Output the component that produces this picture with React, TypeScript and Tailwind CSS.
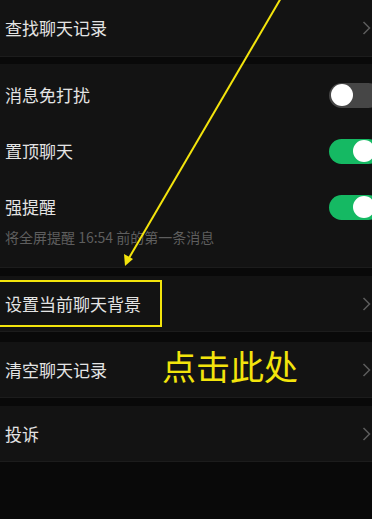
import React from "react";

const font = { fontFamily: '"Noto Sans CJK SC", "Noto Sans", sans-serif' };

function Chevron() {
  return (
    <svg width="9" height="14" viewBox="0 0 9 14" className="shrink-0">
      <path d="M1.5 1 L7.5 7 L1.5 13" fill="none" stroke="#5c5c5c" strokeWidth="1.5" />
    </svg>
  );
}

function Toggle({ on }: { on: boolean }) {
  return (
    <div
      className={`relative h-[25px] w-[52px] shrink-0 -mr-[9px] rounded-full ${
        on ? "bg-[#15b963]" : "bg-[#464646]"
      }`}
    >
      <div
        className={`absolute top-[1.5px] h-[22px] w-[22px] rounded-full bg-white ${
          on ? "right-[6px]" : "left-[1.5px]"
        }`}
      />
    </div>
  );
}

function LinkRow({ label, h = "h-[56px]" }: { label: string; h?: string }) {
  return (
    <div className={`flex ${h} items-center justify-between bg-[#131313] pl-[5px] pr-[1px] border-b border-[#1c1c1c]`}>
      <span className="text-[17px] text-[#e4e4e4]">{label}</span>
      <Chevron />
    </div>
  );
}

export default function App() {
  return (
    <div style={font} className="relative h-[519px] w-[372px] overflow-hidden bg-[#090909]">
      {/* search history */}
      <LinkRow label="查找聊天记录" h="h-[57px]" />
      <div className="h-[7px]" />

      {/* notification section */}
      <div className="bg-[#131313] pt-[3px] border-b border-[#1c1c1c]">
        <div className="flex h-[56px] items-center justify-between pl-[5px]">
          <span className="text-[17px] text-[#e4e4e4]">消息免打扰</span>
          <Toggle on={false} />
        </div>
        <div className="flex h-[56px] items-center justify-between pl-[5px]">
          <span className="text-[17px] text-[#e4e4e4]">置顶聊天</span>
          <Toggle on />
        </div>
        <div className="pt-[7px] pb-[21px]">
          <div className="flex h-[42px] items-center justify-between pl-[5px]">
            <span className="text-[17px] text-[#e4e4e4]">强提醒</span>
            <Toggle on />
          </div>
          <div className="pl-[5px] text-[14px] leading-[18px] text-[#5e5e5e]">
            将全屏提醒 16:54 前的第一条消息
          </div>
        </div>
      </div>
      <div className="h-[8px]" />

      <LinkRow label="设置当前聊天背景" />
      <div className="h-[10px]" />
      <LinkRow label="清空聊天记录" />
      <div className="h-[8px]" />
      <LinkRow label="投诉" />

      {/* annotation overlay */}
      <svg className="pointer-events-none absolute left-0 top-0" width="372" height="519">
        <line x1="281" y1="-2" x2="129" y2="258" stroke="#f3e40c" strokeWidth="2" />
        <polygon points="125,266 124,254 133,259" fill="#f3e40c" />
      </svg>
      <div className="pointer-events-none absolute left-[-3px] top-[280px] h-[47px] w-[165px] border-2 border-[#f3e40c]" />
      <div className="pointer-events-none absolute left-[162px] top-[345px] text-[34px] leading-[42px] text-[#f3e40c]">
        点击此处
      </div>
    </div>
  );
}
